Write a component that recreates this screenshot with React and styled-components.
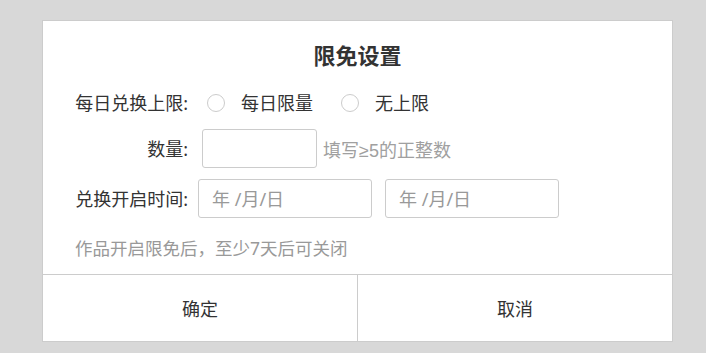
import React from 'react';
import styled, { createGlobalStyle } from 'styled-components';

const GlobalStyle = createGlobalStyle`
    body {
        margin: 0;
        background: #d8d8d8;
        font-family: "Noto Sans", "Noto Sans CJK SC", sans-serif;
        color: #333;
    }
`;

const Page = styled.div`
    padding: 20px 0 0 42px;
`;

const Dialog = styled.div`
    width: 629px;
    background: #fff;
    border: 1px solid #ccc;
`;

const Body = styled.div`
    padding: 19px 0 11px 32px;
`;

const Title = styled.h3`
    margin: 0 0 18px -32px;
    font-size: 22px;
    line-height: 30px;
    font-weight: bold;
    text-align: center;
`;

const Row = styled.div`
    display: flex;
    align-items: center;
    height: ${p => p.h || 39}px;
    margin-bottom: ${p => (p.last ? 0 : 11)}px;
`;

const Label = styled.div`
    width: 113px;
    text-align: right;
    font-size: 18px;
    line-height: 30px;
    white-space: nowrap;
`;

const RadioGroup = styled.div`
    display: flex;
    align-items: center;
    margin-left: 19px;
`;

const Radio = styled.label`
    display: flex;
    align-items: center;
    font-size: 18px;
    line-height: 30px;
    margin-right: 28px;
    &::before {
        content: '';
        width: 16px;
        height: 16px;
        border: 1px solid #ccc;
        border-radius: 50%;
        margin-right: 16px;
    }
`;

const Input = styled.input`
    box-sizing: border-box;
    width: ${p => p.w}px;
    height: 39px;
    margin-left: ${p => p.ml || 0}px;
    padding: 0 13px;
    border: 1px solid #ccc;
    border-radius: 3px;
    font-family: inherit;
    font-size: 18px;
    color: #333;
    outline: none;
    &::placeholder {
        color: #999;
    }
`;

const Hint = styled.span`
    margin-left: 6px;
    font-family: "Liberation Sans", "Noto Sans CJK SC", sans-serif;
    font-size: 18px;
    color: #a0a0a0;
`;

const Note = styled.div`
    margin-top: 15px;
    font-size: 17.5px;
    line-height: 30px;
    color: #999;
`;

const Footer = styled.div`
    display: flex;
    border-top: 1px solid #ccc;
`;

const Button = styled.button`
    flex: 1;
    height: 66px;
    border: none;
    border-left: ${p => (p.divider ? '1px solid #ccc' : 'none')};
    background: #fff;
    font-family: inherit;
    font-size: 18px;
    color: #333;
    cursor: pointer;
`;

const App = () => {
    return (
        <Page>
            <GlobalStyle />
            <Dialog>
                <Body>
                    <Title>限免设置</Title>
                    <Row h={30}>
                        <Label>每日兑换上限:</Label>
                        <RadioGroup>
                            <Radio>每日限量</Radio>
                            <Radio>无上限</Radio>
                        </RadioGroup>
                    </Row>
                    <Row>
                        <Label>数量:</Label>
                        <Input w={115} ml={14} />
                        <Hint>填写≥5的正整数</Hint>
                    </Row>
                    <Row last>
                        <Label>兑换开启时间:</Label>
                        <Input w={174} ml={10} placeholder="年 /月/日" />
                        <Input w={174} ml={13} placeholder="年 /月/日" />
                    </Row>
                    <Note>作品开启限免后，至少7天后可关闭</Note>
                </Body>
                <Footer>
                    <Button>确定</Button>
                    <Button divider>取消</Button>
                </Footer>
            </Dialog>
        </Page>
    );
};

export default App;
